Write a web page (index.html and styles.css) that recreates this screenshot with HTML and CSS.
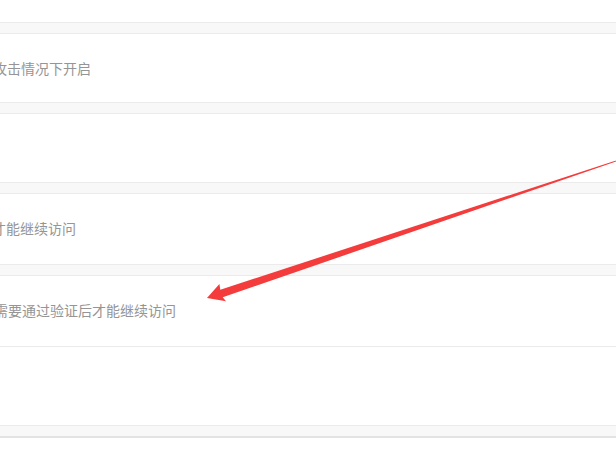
FILE: index.html
```html
<!DOCTYPE html>
<html lang="zh-CN">
<head>
<meta charset="utf-8">
<title>设置</title>
<link rel="stylesheet" href="styles.css">
</head>
<body>
<div class="page">
  <div class="row row-top"></div>
  <div class="band"></div>
  <div class="row row-a">
    <span class="desc desc-a">攻击情况下开启</span>
  </div>
  <div class="band"></div>
  <div class="row row-a"></div>
  <div class="band"></div>
  <div class="row row-b">
    <span class="desc desc-b">才能继续访问</span>
  </div>
  <div class="band"></div>
  <div class="row row-b row-line">
    <span class="desc desc-c">需要通过验证后才能继续访问</span>
  </div>
  <div class="row row-c"></div>
  <div class="band band-last"></div>

  <svg class="arrow" width="616" height="460" viewBox="0 0 616 460" aria-hidden="true">
    <polygon fill="#f43c3c"
      points="207,298 219.4,283.9 220.3,289.7 624.5,157.7 624.2,158.7 222.7,297.3 226.0,301.3"/>
  </svg>
</div>
</body>
</html>
```

FILE: styles.css
```css
html, body {
  margin: 0;
  padding: 0;
  background: #ffffff;
}

body {
  width: 616px;
  height: 460px;
  overflow: hidden;
  font-family: "Noto Sans CJK SC", "Noto Sans", sans-serif;
}

.page {
  position: relative;
  display: flex;
  flex-direction: column;
  height: 460px;
}

.row {
  display: flex;
  align-items: center;
  background: #ffffff;
  overflow: hidden;
}

.row-top { height: 22px; }
.row-a { height: 68px; }
.row-b { height: 70px; }
.row-c { height: 78px; }

.row-line {
  border-bottom: 1px solid #ebebeb;
}

.band {
  height: 10px;
  background: #f8f8f8;
  border-top: 1px solid #ebebeb;
  border-bottom: 1px solid #ebebeb;
}

.band-last {
  border-bottom: 2px solid #e3e3e3;
}

.desc {
  font-size: 14px;
  line-height: 20px;
  color: #959595;
  white-space: nowrap;
}

.desc-a { margin-left: -7px; }
.desc-b { margin-left: -8px; margin-bottom: 2px; }
.desc-c { margin-left: -6px; margin-bottom: 2px; }

.arrow {
  position: absolute;
  left: 0;
  top: 0;
  pointer-events: none;
}
```
